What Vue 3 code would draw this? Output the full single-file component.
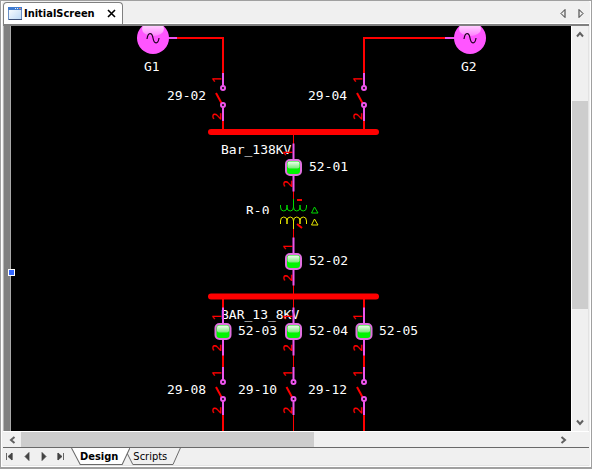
<script setup>
import { ref } from 'vue'

const activeView = ref('Design')
const views = ['Design', 'Scripts']

const pagers = [
  { name: 'First tab', d: 'M0.5 1v7M6 1v7L2 4.5zM6 1v7' },
  { name: 'Previous tab', d: 'M6 0.5v8L2 4.5z' },
  { name: 'Next tab', d: 'M2 0.5v8L6 4.5z' },
  { name: 'Last tab', d: 'M1 1v7M1 1v7L5 4.5zM6.5 1v7' },
]

const generators = [
  { name: 'G1', x: 153, labelX: 144 },
  { name: 'G2', x: 470, labelX: 461 },
]

const buses = [
  { name: 'Bar_138KV', y: 132, labelY: 154 },
  { name: 'BAR_13_8KV', y: 296.5, labelY: 319 },
]

const wires = [
  'M177 38H223V132',
  'M445 38H364V132',
  'M223 297V431',
  'M364 297V431',
]

const switches = [
  { name: '29-02', x: 223, y: 88, labelX: 167 },
  { name: '29-04', x: 364, y: 88, labelX: 308 },
  { name: '29-08', x: 223, y: 382, labelX: 167 },
  { name: '29-10', x: 293.5, y: 382, labelX: 238 },
  { name: '29-12', x: 364, y: 382, labelX: 308 },
]

const breakers = [
  { name: '52-01', x: 293.5, y: 167.5, labelX: 309 },
  { name: '52-02', x: 293.5, y: 261.5, labelX: 309 },
  { name: '52-03', x: 223, y: 331.5, labelX: 238 },
  { name: '52-04', x: 293.5, y: 331.5, labelX: 309 },
  { name: '52-05', x: 364, y: 331.5, labelX: 379 },
]
</script>

<template>
  <div class="window">
    <header class="titlebar">
      <div class="doc-tab">
        <svg class="doc-icon" width="14" height="13" viewBox="0 0 14 13" aria-hidden="true">
          <defs>
            <linearGradient id="pane" x1="0" y1="0" x2="1" y2="1">
              <stop offset="0" stop-color="#ffffff" />
              <stop offset="1" stop-color="#bcd8f6" />
            </linearGradient>
          </defs>
          <rect x="0.5" y="0.5" width="13" height="12" fill="url(#pane)" stroke="#6a8fc4" />
          <rect x="0" y="0" width="14" height="3" fill="#3f7bd0" />
          <path d="M7 1h1v1h-1zM9 1h1v1h-1z" fill="#dcecff" />
          <path d="M11 1h2v1h-2z" fill="#f08a5a" />
          <path d="M1 12.5h13" stroke="#3c4f78" />
        </svg>
        <span class="doc-name">InitialScreen</span>
        <button class="plain close" aria-label="Close">
          <svg width="9" height="9" viewBox="0 0 9 9"><path d="M1 1l7 7M8 1l-7 7" stroke="#000" stroke-width="1.6" /></svg>
        </button>
      </div>
      <div class="doc-nav">
        <button class="plain" aria-label="Previous document">
          <svg width="6" height="9" viewBox="0 0 6 9"><path d="M5 0.5v8l-4-4z" fill="none" stroke="#333" /></svg>
        </button>
        <button class="plain" aria-label="Next document">
          <svg width="6" height="9" viewBox="0 0 6 9"><path d="M1 0.5v8l4-4z" fill="none" stroke="#333" /></svg>
        </button>
      </div>
    </header>

    <div class="workspace">
      <div class="gutter"><span class="handle"></span></div>

      <main class="canvas">
        <svg class="diagram" width="560" height="405" viewBox="11 26 560 405">
          <defs>
            <linearGradient id="gloss" x1="0" y1="0" x2="0" y2="1">
              <stop offset="0" stop-color="#ffffff" stop-opacity="0.9" />
              <stop offset="1" stop-color="#ffffff" stop-opacity="0.25" />
            </linearGradient>
            <linearGradient id="lamp-gloss" x1="0" y1="0" x2="0" y2="1">
              <stop offset="0" stop-color="#f0fff0" />
              <stop offset="1" stop-color="#78e878" />
            </linearGradient>
            <clipPath id="transformer-label"><rect x="240" y="206" width="36" height="8" /></clipPath>
          </defs>

          <g class="wire">
            <path v-for="w in wires" :key="w" :d="w" />
            <path class="thin" d="M293.5 132V199M293.5 229V431" />
          </g>
          <path class="lead" d="M168 38H177M445 38H455" />

          <g v-for="b in buses" :key="b.name">
            <path class="bus" :d="`M211 ${b.y}H376`" />
            <text class="label" x="221" :y="b.labelY">{{ b.name }}</text>
          </g>

          <g v-for="g in generators" :key="g.name">
            <circle :cx="g.x" cy="38" r="16" fill="#ff55ff" />
            <ellipse :cx="g.x" cy="29" rx="11" ry="7" fill="url(#gloss)" />
            <path
              :d="`M${g.x - 6} 39C${g.x - 5} 32 ${g.x - 1} 32 ${g.x} 38S${g.x + 5} 45 ${g.x + 6} 38`"
              fill="none"
              stroke="#200020"
              stroke-width="1.2"
            />
            <text class="label" :x="g.labelX" y="71">{{ g.name }}</text>
          </g>

          <g v-for="s in switches" :key="s.name">
            <path class="gap" :d="`M${s.x} ${s.y}v17`" />
            <path class="lead" :d="`M${s.x} ${s.y - 15}v13M${s.x} ${s.y + 20}v13`" />
            <path class="blade" :d="`M${s.x - 7} ${s.y + 5}l6 11`" />
            <circle class="contact" :cx="s.x" :cy="s.y" r="2" />
            <circle class="contact" :cx="s.x" :cy="s.y + 17" r="2" />
            <text class="pin" :transform="`translate(${s.x - 2} ${s.y - 5}) rotate(-90)`">1</text>
            <text class="pin" :transform="`translate(${s.x - 2} ${s.y + 32}) rotate(-90)`">2</text>
            <text class="label" :x="s.labelX" :y="s.y + 12">{{ s.name }}</text>
          </g>

          <g v-for="k in breakers" :key="k.name">
            <path class="lead" :d="`M${k.x} ${k.y - 24}v48`" />
            <text class="pin" :transform="`translate(${k.x - 2} ${k.y - 11}) rotate(-90)`">1</text>
            <text class="pin" :transform="`translate(${k.x - 2} ${k.y + 20}) rotate(-90)`">2</text>
            <rect :x="k.x - 7.5" :y="k.y - 7.5" width="15" height="15" rx="4" fill="#00f400" stroke="#e070e0" stroke-width="2" />
            <rect :x="k.x - 6" :y="k.y - 6" width="12" height="7" rx="2" fill="url(#lamp-gloss)" />
            <text class="label" :x="k.labelX" :y="k.y + 3">{{ k.name }}</text>
          </g>

          <g fill="none">
            <path
              stroke="#00d800"
              d="M280.5 205v2a3.25 4 0 0 0 6.5 0v-2v2a3.25 4 0 0 0 6.5 0v-8v8a3.25 4 0 0 0 6.5 0v-2v2a3.25 4 0 0 0 6.5 0v-2M311.5 213l3-6l3.5 6z"
            />
            <path
              stroke="#e8e800"
              d="M280.5 224v-3a3.25 4 0 0 1 6.5 0v3v-3a3.25 4 0 0 1 6.5 0v8v-8a3.25 4 0 0 1 6.5 0v3v-3a3.25 4 0 0 1 6.5 0v3M311.5 225l3-6l3.5 6z"
            />
            <path stroke="#ff0000" stroke-width="2" d="M297 200h5M297 224l5 4" />
          </g>
          <g clip-path="url(#transformer-label)">
            <text class="label" x="246" y="215">R-0</text>
          </g>
        </svg>
      </main>

      <div class="vscroll">
        <button class="plain arrow" aria-label="Scroll up">
          <svg width="8" height="7" viewBox="0 0 8 7"><path d="M1 5.5l3-3.5l3 3.5" /></svg>
        </button>
        <div class="vtrack">
          <span class="vspace"></span>
          <span class="vthumb"></span>
          <span class="vrest"></span>
        </div>
        <button class="plain arrow" aria-label="Scroll down">
          <svg width="8" height="7" viewBox="0 0 8 7"><path d="M1 1.5l3 3.5l3-3.5" /></svg>
        </button>
      </div>
    </div>

    <div class="hscroll">
      <button class="plain arrow" aria-label="Scroll left">
        <svg width="7" height="8" viewBox="0 0 7 8"><path d="M5.5 1L2 4l3.5 3" /></svg>
      </button>
      <div class="htrack"><span class="hthumb"></span></div>
      <button class="plain arrow" aria-label="Scroll right">
        <svg width="7" height="8" viewBox="0 0 7 8"><path d="M1.5 1L5 4L1.5 7" /></svg>
      </button>
    </div>

    <footer class="tabbar">
      <div class="pager">
        <button v-for="p in pagers" :key="p.name" class="plain" :aria-label="p.name">
          <svg width="7" height="9" viewBox="0 0 7 9"><path :d="p.d" fill="#444" stroke="#444" stroke-width="0.8" /></svg>
        </button>
      </div>
      <nav class="views">
        <button
          v-for="v in views"
          :key="v"
          class="plain view"
          :class="{ active: v === activeView }"
          @click="activeView = v"
        >
          <svg class="shape" viewBox="0 0 58 17" preserveAspectRatio="none" aria-hidden="true">
            <path d="M0.5 0L9 16.5H50L57.5 0" />
          </svg>
          <span class="view-name">{{ v }}</span>
        </button>
      </nav>
    </footer>
  </div>
</template>

<style>
body {
  margin: 0;
  background: #f0f0f0;
}
</style>

<style scoped>
.window {
  box-sizing: border-box;
  height: 100vh;
  display: flex;
  flex-direction: column;
  padding: 0 2px 1px 2px;
  border: 1px solid #a0a0a0;
  border-width: 1px 1px 2px 1px;
  background: #f0f0f0;
  box-shadow: inset 0 0 0 1px #fff;
  font-family: "DejaVu Sans Condensed", "DejaVu Sans", sans-serif;
  font-size: 11px;
  color: #000;
}

.plain {
  padding: 0;
  border: 0;
  background: none;
  font: inherit;
  color: inherit;
  display: flex;
  align-items: center;
  justify-content: center;
}

.titlebar {
  flex: none;
  height: 22px;
  padding-top: 1px;
  display: flex;
  justify-content: space-between;
  background: #f0f0f0;
  border-bottom: 2px solid #808080;
  box-shadow: inset 0 -1px #fff;
}

.doc-tab {
  box-sizing: border-box;
  display: flex;
  align-items: center;
  padding: 0 6px 0 4px;
  border: 1px solid #808080;
  border-bottom: 0;
  border-radius: 4px 4px 0 0;
  background: #fff;
  font-weight: bold;
}

.doc-name {
  margin: 0 12px 0 2px;
}

.doc-nav {
  display: flex;
  align-items: center;
  gap: 12px;
  padding-right: 5px;
}

.workspace {
  flex: 1;
  min-height: 0;
  display: flex;
}

.gutter {
  box-sizing: border-box;
  width: 8px;
  flex: none;
  position: relative;
  background: #808080;
  border-left: 1px solid #b4b4b4;
  border-right: 1px solid #a8a8a8;
}

.handle {
  position: absolute;
  right: -5px;
  top: 60%;
  width: 5px;
  height: 5px;
  border: 1px solid #fff;
  background: #3366ff;
}

.canvas {
  flex: 1;
  min-width: 0;
  overflow: hidden;
  background: #000;
}

.diagram {
  display: block;
}

.label {
  font-family: "DejaVu Sans Mono", monospace;
  font-size: 13px;
  fill: #fff;
}

.pin {
  font-family: "Noto Sans", sans-serif;
  font-size: 13px;
  font-weight: 500;
  fill: #ff0000;
}

.wire {
  fill: none;
  stroke: #ff0000;
  stroke-width: 2;
}

.thin {
  stroke-width: 1;
}

.bus {
  stroke: #ff0000;
  stroke-width: 6;
  stroke-linecap: round;
}

.lead {
  fill: none;
  stroke: #ee55ee;
  stroke-width: 2;
}

.gap {
  stroke: #000;
  stroke-width: 4;
}

.blade {
  stroke: #ff0000;
  stroke-width: 2;
}

.contact {
  fill: #000;
  stroke: #ee55ee;
  stroke-width: 2;
}

.arrow path {
  fill: none;
  stroke: #606060;
  stroke-width: 2;
}

.vscroll {
  width: 16px;
  flex: none;
  display: flex;
  flex-direction: column;
  background: #f0f0f0;
  border-left: 1px solid #fff;
  border-right: 1px solid #e3e3e3;
}

.vscroll .arrow {
  height: 17px;
}

.vtrack {
  flex: 1;
  display: flex;
  flex-direction: column;
}

.vspace {
  flex: 58;
}

.vthumb {
  flex: 208;
  background: #cdcdcd;
}

.vrest {
  flex: 105;
}

.hscroll {
  flex: none;
  height: 15px;
  display: flex;
  padding-right: 17px;
  background: #f0f0f0;
  border-top: 1px solid #fff;
  border-bottom: 1px solid #696969;
}

.hscroll .arrow {
  width: 18px;
}

.htrack {
  flex: 1;
  display: flex;
}

.hthumb {
  width: 55%;
  background: #cdcdcd;
}

.tabbar {
  flex: none;
  height: 17px;
  display: flex;
  background: #f0f0f0;
  border-bottom: 1px solid #e3e3e3;
}

.pager {
  display: flex;
  align-items: center;
  gap: 10px;
  padding: 0 7px 0 3px;
}

.views {
  display: flex;
}

.view {
  position: relative;
  padding: 0 12px 0 9px;
}

.view + .view {
  margin-left: -6px;
  padding: 0 14px 0 9px;
}

.view.active {
  z-index: 1;
  font-weight: bold;
}

.shape {
  position: absolute;
  inset: 0;
  width: 100%;
  height: 100%;
}

.shape path {
  fill: #f0f0f0;
  stroke: #696969;
}

.active .shape path {
  fill: #fff;
}

.view-name {
  position: relative;
}
</style>
